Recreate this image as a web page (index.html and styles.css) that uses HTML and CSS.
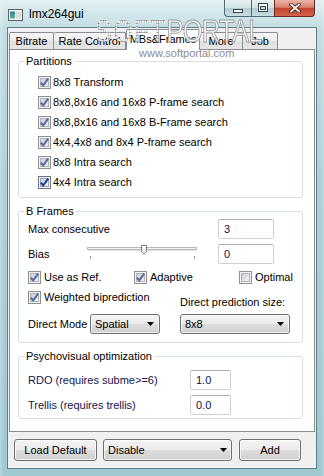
FILE: index.html
```html
<!DOCTYPE html>
<html>
<head>
<meta charset="utf-8">
<link rel="stylesheet" href="styles.css">
</head>
<body>
<svg class="defs" width="0" height="0">
  <defs>
    <linearGradient id="chkfill" x1="0" y1="0" x2="1" y2="1">
      <stop offset="0" stop-color="#c9cdd3"/>
      <stop offset="1" stop-color="#f7f7f7"/>
    </linearGradient>
    <linearGradient id="iconfill" x1="0" y1="0" x2="0" y2="1">
      <stop offset="0" stop-color="#2a7f93"/>
      <stop offset="1" stop-color="#6bb59a"/>
    </linearGradient>
    <symbol id="chk-off" viewBox="0 0 13 13">
      <rect x=".5" y=".5" width="12" height="12" fill="#f4f4f4" stroke="#8e8f8f"/>
      <rect x="2.5" y="2.5" width="8" height="8" fill="url(#chkfill)" stroke="#b1b5ba"/>
    </symbol>
    <symbol id="chk-on" viewBox="0 0 13 13">
      <rect x=".5" y=".5" width="12" height="12" fill="#f4f4f4" stroke="#8e8f8f"/>
      <rect x="2.5" y="2.5" width="8" height="8" fill="url(#chkfill)" stroke="#b1b5ba"/>
      <path d="M2.8 6.6 L5.2 9.4 L10.2 2.6" fill="none" stroke="#5569a3" stroke-width="2"/>
    </symbol>
    <symbol id="chk-hot" viewBox="0 0 13 13">
      <rect x=".5" y=".5" width="12" height="12" fill="#f2f4f8" stroke="#6f7580"/>
      <rect x="2.5" y="2.5" width="8" height="8" fill="url(#chkfill)" stroke="#9fa6b2"/>
      <path d="M2.8 6.6 L5.2 9.4 L10.2 2.6" fill="none" stroke="#1f3c9e" stroke-width="2"/>
    </symbol>
    <symbol id="arrow" viewBox="0 0 7 4">
      <path d="M0 0H7L3.5 4Z" fill="#000"/>
    </symbol>
  </defs>
</svg>
<div class="window">
  <div class="titlebar">
    <svg class="app-icon" width="15" height="12" viewBox="0 0 15 12">
      <rect x=".5" y=".5" width="14" height="11" fill="#f3f3f3" stroke="#5f5f5f"/>
      <rect x="2" y="2.5" width="5" height="7" fill="url(#iconfill)"/>
      <rect x="8" y="2.5" width="5" height="7" fill="#dcdcdc"/>
    </svg>
    <span class="title">lmx264gui</span>
    <div class="caption">
      <div class="cbtn cbtn-min">
        <svg width="10" height="4" viewBox="0 0 10 4"><rect x=".5" y=".5" width="9" height="3" fill="#fff" stroke="#33434a"/></svg>
      </div>
      <div class="cbtn cbtn-max">
        <svg width="10" height="9" viewBox="0 0 10 9"><rect x=".5" y=".5" width="9" height="8" fill="#fff" stroke="#33434a"/><rect x="2.5" y="3.5" width="5" height="3" fill="#c9d9de" stroke="#33434a"/></svg>
      </div>
      <div class="cbtn cbtn-close">
        <svg width="12" height="10" viewBox="0 0 12 10"><path d="M2 1.5L10 8.5M10 1.5L2 8.5" stroke="#4a1a12" stroke-width="3.6" stroke-linecap="square"/><path d="M2 1.5L10 8.5M10 1.5L2 8.5" stroke="#fff" stroke-width="1.8" stroke-linecap="square"/></svg>
      </div>
    </div>
  </div>
  <div class="client">
    <div class="tabs">
      <div class="tab tab-bitrate">Bitrate</div>
      <div class="tab tab-rate">Rate Control</div>
      <div class="tab tab-mbs active">MBs&amp;Frames</div>
      <div class="tab tab-more">More</div>
      <div class="tab tab-job">Job</div>
    </div>
    <div class="panel">
      <fieldset class="group">
        <legend>Partitions</legend>
        <div class="group-body body-partitions">
          <div class="check-row"><svg class="check"><use href="#chk-on"/></svg><span>8x8 Transform</span></div>
          <div class="check-row"><svg class="check"><use href="#chk-on"/></svg><span>8x8,8x16 and 16x8 P-frame search</span></div>
          <div class="check-row"><svg class="check"><use href="#chk-on"/></svg><span>8x8,8x16 and 16x8 B-Frame search</span></div>
          <div class="check-row"><svg class="check"><use href="#chk-on"/></svg><span>4x4,4x8 and 8x4 P-frame search</span></div>
          <div class="check-row"><svg class="check"><use href="#chk-on"/></svg><span>8x8 Intra search</span></div>
          <div class="check-row"><svg class="check"><use href="#chk-hot"/></svg><span>4x4 Intra search</span></div>
        </div>
      </fieldset>
      <fieldset class="group group-next">
        <legend>B Frames</legend>
        <div class="group-body body-bframes">
          <div class="field-row">
            <span class="label-max">Max consecutive</span>
            <div class="textbox tb-wide">3</div>
          </div>
          <div class="field-row row-gap">
            <span class="label-bias">Bias</span>
            <svg class="slider" width="110" height="20" viewBox="0 0 110 20">
              <rect x=".5" y="3.5" width="109" height="2" fill="#f4f4f4" stroke="#b5b8bb"/>
              <line x1="1" y1="6.5" x2="109" y2="6.5" stroke="#e6e6e6"/>
              <path d="M54.5 1.5H59.5V7.5L57 10L54.5 7.5Z" fill="#f1f1f1" stroke="#7d8186"/>
              <line x1="3.5" y1="12" x2="3.5" y2="15" stroke="#a0a0a0"/>
              <line x1="107.5" y1="12" x2="107.5" y2="15" stroke="#a0a0a0"/>
            </svg>
            <div class="textbox tb-wide">0</div>
          </div>
          <div class="checks-grid">
            <div class="check-item"><svg class="check"><use href="#chk-on"/></svg><span>Use as Ref.</span></div>
            <div class="check-item"><svg class="check"><use href="#chk-on"/></svg><span>Adaptive</span></div>
            <div class="check-item"><svg class="check"><use href="#chk-off"/></svg><span>Optimal</span></div>
          </div>
          <div class="lower">
            <div class="lower-left">
              <div class="check-item"><svg class="check"><use href="#chk-on"/></svg><span>Weighted biprediction</span></div>
              <div class="dm-row">
                <span class="label-dm">Direct Mode</span>
                <div class="combo combo-spatial"><span>Spatial</span><svg class="arrow" width="7" height="4"><use href="#arrow"/></svg></div>
              </div>
            </div>
            <div class="lower-right">
              <div class="label-dps">Direct prediction size:</div>
              <div class="combo combo-size"><span>8x8</span><svg class="arrow" width="7" height="4"><use href="#arrow"/></svg></div>
            </div>
          </div>
        </div>
      </fieldset>
      <fieldset class="group group-next">
        <legend>Psychovisual optimization</legend>
        <div class="group-body body-psy">
          <div class="field-row">
            <span class="label-psy">RDO (requires subme&gt;=6)</span>
            <div class="textbox tb-narrow">1.0</div>
          </div>
          <div class="field-row row-gap">
            <span class="label-psy">Trellis (requires trellis)</span>
            <div class="textbox tb-narrow">0.0</div>
          </div>
        </div>
      </fieldset>
    </div>
    <div class="bottombar">
      <div class="button btn-load">Load Default</div>
      <div class="combo combo-disable"><span>Disable</span><svg class="arrow" width="7" height="4"><use href="#arrow"/></svg></div>
      <div class="button btn-add">Add</div>
    </div>
  </div>
  <div class="watermark">
    <span class="wm-soft">SOFT</span><span class="wm-portal">PORTAL</span>
  </div>
  <div class="wm-url">www.softportal.com</div>
</div>
</body>
</html>
```
FILE: styles.css
```css
* { box-sizing: border-box; }
html, body { margin: 0; padding: 0; }
body {
  width: 324px;
  height: 476px;
  overflow: hidden;
  font-family: "Liberation Sans", Arial, sans-serif;
  font-size: 11px;
  color: #000;
}
.defs { display: block; width: 0; height: 0; overflow: hidden; }

.window {
  position: relative;
  width: 324px;
  height: 476px;
  display: flex;
  flex-direction: column;
  padding: 0 7px 7px;
  background:
    linear-gradient(90deg, rgba(255,255,255,0.25) 0, rgba(255,255,255,0) 4px, rgba(255,255,255,0) 320px, rgba(255,255,255,0.2) 324px),
    linear-gradient(180deg, #e2f0f3 0%, #c2dde3 6%, #acd0d8 40%, #9fc8d1 100%);
}

/* title bar */
.titlebar { height: 27px; display: flex; align-items: flex-start; flex: none; }
.app-icon { margin: 9px 0 0 1px; flex: none; }
.title { margin: 7px 0 0 6px; font-size: 12px; line-height: 14px; color: #000; }
.caption { margin-left: auto; margin-right: 2px; display: flex; height: 17px; }
.cbtn { height: 17px; display: flex; align-items: center; justify-content: center; border: 1px solid #4d6a74; border-top: none; }
.cbtn-min {
  width: 27px;
  border-right: none;
  border-radius: 0 0 0 4px;
  background: linear-gradient(180deg, #e6f0f2 0%, #d3e3e7 48%, #b3ccd3 52%, #c8dde2 100%);
  align-items: flex-end;
  padding-bottom: 3px;
}
.cbtn-max {
  width: 23px;
  border-right: none;
  background: linear-gradient(180deg, #e6f0f2 0%, #d3e3e7 48%, #b3ccd3 52%, #c8dde2 100%);
  align-items: flex-start;
  padding-top: 3px;
}
.cbtn-close {
  width: 41px;
  border-color: #6a2c20;
  border-radius: 0 0 4px 0;
  background: linear-gradient(180deg, #eab4a7 0%, #d9836f 45%, #c4442c 52%, #d4654a 100%);
  padding-top: 0;
}

/* client area */
.client {
  flex: 1;
  display: flex;
  flex-direction: column;
  border: 1px solid #5f7f89;
  background: #f0f0f0;
}
.tabs {
  height: 21px;
  display: flex;
  align-items: flex-end;
  padding-left: 1px;
  position: relative;
  z-index: 1;
  flex: none;
}
.tab {
  height: 17px;
  border: 1px solid #898c95;
  border-bottom: none;
  border-radius: 2px 2px 0 0;
  background: linear-gradient(180deg, #f6f6f6 0%, #ececec 50%, #e0e0e0 51%, #e6e6e6 100%);
  text-align: center;
  line-height: 16px;
  white-space: nowrap;
}
.tab-bitrate { width: 45px; }
.tab-rate { width: 72px; border-left: none; }
.tab-mbs { width: 74px; }
.tab-more { width: 43px; border-left: none; }
.tab-job { width: 35px; border-left: none; }
.tab.active {
  height: 21px;
  margin-bottom: -1px;
  background: #fff;
  line-height: 18px;
}

.panel {
  flex: 1;
  margin: 0 1px;
  border: 1px solid #898c95;
  background: #fff;
  padding: 4px 11px 0 8px;
  display: flex;
  flex-direction: column;
}

.group {
  margin: 0;
  padding: 0;
  border: 1px solid #d5dfe5;
  border-radius: 3px;
  min-width: 0;
}
.group legend {
  margin-left: 5px;
  padding: 0 2px;
  line-height: 14px;
  font-size: 11px;
}
.group-next { margin-top: 6px; }

.body-partitions { padding: 4px 0 5px 19px; }
.check-row { display: flex; align-items: center; height: 20px; gap: 2px; }
.check { width: 13px; height: 13px; flex: none; }

.body-bframes { padding: 1px 0 8px 9px; }
.field-row { display: flex; align-items: center; height: 20px; }
.row-gap { margin-top: 5px; }
.label-max { width: 190px; }
.label-bias { width: 59px; }
.slider { flex: none; margin-right: 21px; }
.textbox {
  height: 20px;
  border: 1px solid #cdd1d7;
  border-top-color: #abadb3;
  border-radius: 2px;
  background: #fff;
  padding: 0 5px;
  line-height: 18px;
  color: #10104a;
}
.tb-wide { width: 56px; }
.tb-narrow { width: 41px; }

.checks-grid {
  display: grid;
  grid-template-columns: 106px 105px auto;
  margin-top: 6px;
  height: 14px;
}
.check-item { display: flex; align-items: center; gap: 3px; height: 14px; }
.lower { display: flex; margin-top: 6px; }
.lower-left { width: 152px; }
.dm-row { display: flex; align-items: center; height: 20px; margin-top: 10px; }
.label-dm { width: 62px; }
.lower-right { padding-top: 5px; }
.label-dps { height: 14px; line-height: 14px; }

.combo {
  display: flex;
  align-items: center;
  justify-content: space-between;
  height: 20px;
  padding: 0 5px 0 4px;
  border: 1px solid #707070;
  border-radius: 3px;
  background: linear-gradient(180deg, #f3f3f3 0%, #ebebeb 50%, #dddddd 51%, #d0d0d0 100%);
  box-shadow: inset 0 0 0 1px rgba(255,255,255,0.7);
}
.combo-spatial { width: 70px; }
.combo-size { width: 110px; margin-top: 5px; }
.arrow { flex: none; }

.body-psy { padding: 7px 0 3px 9px; }
.label-psy { width: 162px; color: #14144e; }

/* bottom bar */
.bottombar {
  display: flex;
  height: 22px;
  margin: 7px 0;
  padding-left: 6px;
  flex: none;
}
.button {
  height: 22px;
  border: 1px solid #707070;
  border-radius: 3px;
  background: linear-gradient(180deg, #f3f3f3 0%, #ebebeb 50%, #dddddd 51%, #cfcfcf 100%);
  box-shadow: inset 0 0 0 1px rgba(255,255,255,0.7);
  text-align: center;
  line-height: 20px;
}
.btn-load { width: 83px; }
.combo-disable { width: 129px; height: 22px; margin-left: 6px; padding-right: 4px; }
.btn-add { width: 62px; margin-left: 7px; }

/* watermark overlay */
.watermark {
  position: absolute;
  left: 95px;
  top: 14px;
  font-family: "Liberation Sans", Arial, sans-serif;
  font-size: 32px;
  line-height: 34px;
  white-space: nowrap;
  transform: scaleX(0.8);
  transform-origin: 0 0;
  z-index: 5;
  pointer-events: none;
}
.wm-soft {
  color: transparent;
  background-image: radial-gradient(circle, #8a8a8a 0.9px, rgba(255,255,255,0.9) 1.2px);
  background-size: 3px 3px;
  -webkit-background-clip: text;
  background-clip: text;
  letter-spacing: 1px;
}
.wm-portal {
  color: rgba(255,255,255,0.85);
  -webkit-text-stroke: 1px #9a9a9a;
  letter-spacing: -1px;
}
.wm-url {
  position: absolute;
  left: 139px;
  top: 47px;
  font-size: 11px;
  line-height: 12px;
  color: #8d8d8d;
  z-index: 5;
  pointer-events: none;
}
```
